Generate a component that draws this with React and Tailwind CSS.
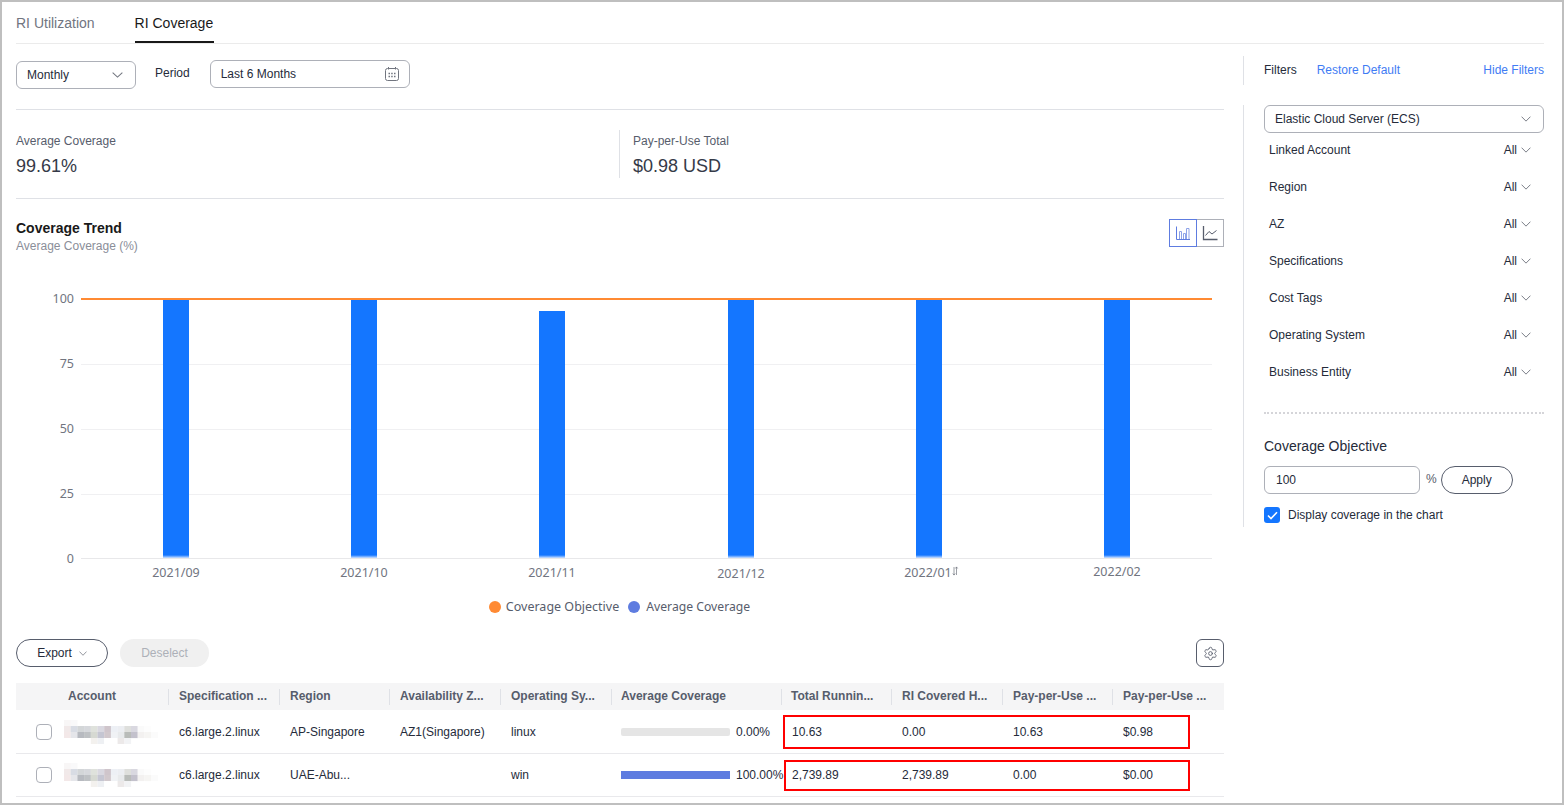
import React from "react";
import { Settings } from "lucide-react";

const Chev = ({ className = "", w = 10, h = 6 }) => (
  <svg width={w} height={h} viewBox="0 0 12 7" className={className} fill="none" preserveAspectRatio="none">
    <path d="M0.7 0.8 L6 6 L11.3 0.8" stroke="#71757f" strokeWidth="1.1" />
  </svg>
);

const filters = ["Linked Account", "Region", "AZ", "Specifications", "Cost Tags", "Operating System", "Business Entity"];
const heads = ["Account", "Specification ...", "Region", "Availability Z...", "Operating Sy...", "Average Coverage", "Total Runnin...", "RI Covered H...", "Pay-per-Use ...", "Pay-per-Use ..."];
const cols = "grid grid-cols-[152px_111px_110px_111px_111px_170px_110px_111px_110px_112px]";

const bars = [
  { x: 176, top: 299 },
  { x: 364, top: 299 },
  { x: 552, top: 311 },
  { x: 741, top: 299 },
  { x: 929, top: 299 },
  { x: 1117, top: 299 },
];
const xLabels = [
  ["2021/09", 176, 577],
  ["2021/10", 364, 577],
  ["2021/11", 552, 577],
  ["2021/12", 741, 578],
  ["2022/01", 928, 577],
  ["2022/02", 1117, 576],
];

function Chart() {
  return (
    <svg width="1208" height="316" viewBox="16 270 1208 316" className="block" style={{ fontFamily: '"Noto Sans", sans-serif' }}>
      <defs>
        <linearGradient id="fade" x1="0" y1="0" x2="0" y2="1">
          <stop offset="0" stopColor="#1476ff" />
          <stop offset="1" stopColor="#cfe2ff" />
        </linearGradient>
      </defs>
      {[364, 429, 494].map((y) => (
        <line key={y} x1="81" x2="1212" y1={y + 0.5} y2={y + 0.5} stroke="#f0f0f2" />
      ))}
      <line x1="81" x2="1212" y1="558.5" y2="558.5" stroke="#e8e8ea" />
      {[["100", 303], ["75", 368], ["50", 433], ["25", 498], ["0", 563]].map(([t, y]) => (
        <text key={t} x="74" y={y} textAnchor="end" fontSize="12.5" fill="#71757f">{t}</text>
      ))}
      {bars.map((b) => (
        <g key={b.x}>
          <rect x={b.x - 13} y={b.top} width="26" height={555 - b.top} fill="#1476ff" />
          <rect x={b.x - 13} y="555" width="26" height="3" fill="url(#fade)" />
        </g>
      ))}
      <line x1="81" x2="1212" y1="299" y2="299" stroke="#ff8a33" strokeWidth="2" />
      {xLabels.map(([t, x, y]) => (
        <text key={t} x={x} y={y} textAnchor="middle" fontSize="12.5" fill="#71757f">{t}</text>
      ))}
      <path d="M954 567v8M952.8 573.5l1.2 1.6 1.2-1.6M956.5 575v-8M955.3 568.5l1.2-1.6 1.2 1.6" stroke="#71757f" strokeWidth="0.7" fill="none" />
    </svg>
  );
}

const mosaicRows = [
  ["#f8f6f6", "#f9f9fa"],
  ["#f1e9e9", "#d8dce4", "#d3d6d8", "#d6d8dc", "#dfe2dc", "#d9d8e0", "#cfc5cb", "#edf0f5", "#eceef2", "#dedfdc", "#d9d8e0", "#fafafa", "#fdfdfd", "#ffffff"],
  ["#f3e8e8", "#e5e6ea", "#b7bac0", "#bec1c4", "#d6d9d2", "#c5c6d2", "#d1c8cc", "#f0f2f5", "#e8eaec", "#b9bcb9", "#c3c1cc", "#f3f1f0", "#f6f5f3", "#fbfbfb"],
  ["#ffffff", "#ffffff", "#ffffff", "#ffffff", "#f3f1ee", "#eef0f3", "#ffffff", "#ffffff", "#ece9e9", "#f2f3f5"],
];

function Mosaic() {
  return (
    <svg width="94" height="24" viewBox="0 0 94 24" className="block shrink-0">
      {mosaicRows.map((row, r) =>
        row.map((c, i) => <rect key={`${r}-${i}`} x={i * 6.7} y={r * 6} width="6.8" height="6.1" fill={c} />)
      )}
    </svg>
  );
}

function Row({ spec, region, az, os, pct, pctText, vals, boxClass }) {
  return (
    <div className={`${cols} relative h-[43px] items-center border-b border-[#e9e9ec] text-xs text-[#252b3a]`}>
      <div className="flex items-center pl-[20px] gap-[12px]">
        <span className="w-4 h-4 rounded-[4px] border border-[#adb0b8] bg-white shrink-0" />
        <Mosaic />
      </div>
      <div className="pl-[11px]">{spec}</div>
      <div className="pl-[11px]">{region}</div>
      <div className="pl-[11px]">{az}</div>
      <div className="pl-[11px]">{os}</div>
      <div className="pl-[10px] flex items-center gap-[6px]">
        <div className={`w-[109px] h-2 shrink-0 ${pct ? "bg-[#5e7ce0]" : "bg-[#e5e5e5] rounded-[2px]"}`} />
        <span className="whitespace-nowrap">{pctText}</span>
      </div>
      {vals.map((v, i) => (
        <div key={i} className="pl-[11px]">{v}</div>
      ))}
      <div className={`absolute border-2 border-[#ff0000] pointer-events-none ${boxClass}`} />
    </div>
  );
}

export default function App() {
  return (
    <div
      className="w-[1564px] h-[805px] box-border border-2 border-[#bfbfbf] bg-white pl-[14px] pr-[18px] overflow-hidden text-[#252b3a]"
      style={{ fontFamily: '"Liberation Sans", Arial, sans-serif' }}
    >
      {/* Tabs */}
      <div className="flex gap-[40px] h-[42px] border-b border-[#ebebeb] text-sm">
        <div className="h-[41px] pt-[11px] text-[#71757f]">RI Utilization</div>
        <div className="h-[41px] pt-[11px] w-[79px] border-b-2 border-[#191919] text-[#191919]">RI Coverage</div>
      </div>

      <div className="flex">
        {/* Left column */}
        <div className="w-[1208px] shrink-0">
          <div className="flex items-start h-[66px] border-b border-[#dfe1e6] pt-[16px] text-xs">
            <div className="mt-[1px] w-[120px] h-[28px] rounded-[6px] border border-[#adb0b8] flex items-center justify-between pl-[10px] pr-[12px]">
              <span>Monthly</span>
              <Chev w={11} />
            </div>
            <span className="ml-[19px] mt-[5px]">Period</span>
            <div className="ml-[20px] w-[200px] h-[28px] rounded-[6px] border border-[#adb0b8] flex items-center justify-between pl-[10px] pr-[9px]">
              <span className="-mt-[1px]">Last 6 Months</span>
              <svg width="16" height="16" viewBox="0 0 16 16" fill="none" stroke="#71757f">
                <rect x="1.5" y="2.5" width="13" height="12" rx="2" />
                <path d="M4.5 1v2.5M11.5 1v2.5" />
                <path d="M4.5 7.5h1.5M7.2 7.5h1.5M10 7.5h1.5M4.5 10.5h1.5M7.2 10.5h1.5M10 10.5h1.5" strokeWidth="1.5" />
              </svg>
            </div>
          </div>

          <div className="flex h-[89px] border-b border-[#dfe1e6] pt-[20px]">
            <div className="w-[603px] pt-[4px]">
              <div className="text-xs text-[#575d6c] leading-[14px]">Average Coverage</div>
              <div className="text-lg leading-[22px] mt-[7px] text-[#353a48]">99.61%</div>
            </div>
            <div className="h-[48px] border-l border-[#dfe1e6] pl-[13px] pt-[4px]">
              <div className="text-xs text-[#575d6c] leading-[14px]">Pay-per-Use Total</div>
              <div className="text-lg leading-[22px] mt-[7px] text-[#353a48]">$0.98 USD</div>
            </div>
          </div>

          <div className="flex justify-between pt-[20px] h-[71px]">
            <div>
              <div className="text-sm font-bold text-[#191919] leading-[18px]">Coverage Trend</div>
              <div className="text-xs text-[#8a8e99] leading-[16px] mt-[1px]">Average Coverage (%)</div>
            </div>
            <div className="flex h-[28px]">
              <div className="w-[28px] h-[28px] border border-[#5e7ce0] flex items-center justify-center">
                <svg width="16" height="16" viewBox="0 0 16 16" fill="none" stroke="#8ea3e8">
                  <path d="M1.5 1.5v13h13.5" stroke="#5e7ce0" />
                  <path d="M4.5 14V6.5h2V14M8.5 14V8.5h2V14M11.5 14V3.5h2.5V14" />
                </svg>
              </div>
              <div className="w-[27px] h-[28px] border border-l-0 border-[#adb0b8] flex items-center justify-center">
                <svg width="16" height="16" viewBox="0 0 16 16" fill="none" stroke="#575d6c">
                  <path d="M1.5 1v13.5h14" strokeWidth="1.3" />
                  <path d="M3.5 10.5l3.5-4 3 2.5 4.5-3.5" />
                </svg>
              </div>
            </div>
          </div>

          <Chart />

          {/* Legend */}
          <div className="flex justify-center items-center gap-[9px] h-[54px] pb-[12px] pr-[1px] text-[12.5px] text-[#575d6c]" style={{ fontFamily: '"Noto Sans", sans-serif' }}>
            <div className="flex items-center gap-[5px]"><span className="w-3 h-3 rounded-full bg-[#ff8a33]" />Coverage Objective</div>
            <div className="flex items-center gap-[6px] text-[12.2px]"><span className="w-3 h-3 rounded-full bg-[#5e7ce0]" />Average Coverage</div>
          </div>

          {/* Toolbar */}
          <div className="flex items-center h-[28px] text-xs -mt-[1px]">
            <div className="w-[92px] h-[28px] rounded-full border border-[#575d6c] flex items-center justify-center gap-[7px]">
              Export <Chev w={8} h={5} />
            </div>
            <div className="ml-[12px] w-[89px] h-[28px] rounded-full bg-[#f0f0f0] text-[#adb0b8] flex items-center justify-center">Deselect</div>
            <div className="ml-auto w-[28px] h-[28px] rounded-[6px] border border-[#575d6c] flex items-center justify-center">
              <Settings size={15} strokeWidth={1.4} color="#575d6c" />
            </div>
          </div>

          {/* Table */}
          <div className="mt-[16px]">
            <div className={`${cols} h-[27px] mb-[1px] items-center bg-[#f5f5f6] text-xs font-bold text-[#575d6c]`}>
              {heads.map((h, i) => (
                <div
                  key={i}
                  className={
                    i === 0
                      ? "pl-[52px] -mt-[1px]"
                      : i === 5 || i === 6
                        ? "h-[16px] leading-[14px] border-l border-[#dfe1e6] pl-[9px] whitespace-nowrap overflow-hidden"
                        : "h-[16px] leading-[14px] border-l border-[#dfe1e6] pl-[10px] whitespace-nowrap overflow-hidden"
                  }
                >
                  {h}
                </div>
              ))}
            </div>
            <Row
              spec="c6.large.2.linux" region="AP-Singapore" az="AZ1(Singapore)" os="linux" pct={0} pctText="0.00%"
              vals={["10.63", "0.00", "10.63", "$0.98"]}
              boxClass="left-[767px] top-[4px] w-[407px] h-[34px]"
            />
            <Row
              spec="c6.large.2.linux" region="UAE-Abu..." az="" os="win" pct={100} pctText="100.00%"
              vals={["2,739.89", "2,739.89", "0.00", "$0.00"]}
              boxClass="left-[768px] top-[6px] w-[406px] h-[31px]"
            />
          </div>
        </div>

        {/* Right column */}
        <div className="ml-[19px] w-[301px] shrink-0">
          <div className="mt-[12px] h-[29px] pb-[2px] border-l border-[#dfe1e6] pl-[20px] flex items-center text-xs">
            <span>Filters</span>
            <span className="ml-[20px] text-[#3f7cf4]">Restore Default</span>
            <span className="ml-auto text-[#3f7cf4]">Hide Filters</span>
          </div>
          <div className="mt-[20px] h-[422px] border-l border-[#dfe1e6] pl-[20px]">
            <div className="h-[28px] rounded-[6px] border border-[#adb0b8] flex items-center justify-between pl-[10px] pr-[12px] text-xs">
              <span>Elastic Cloud Server (ECS)</span>
              <Chev />
            </div>
            <div className="text-xs -mt-[2px]">
              {filters.map((f) => (
                <div key={f} className="flex items-center justify-between h-[37px] pl-[5px] pr-[13px]">
                  <span>{f}</span>
                  <span className="flex items-center gap-[4px]">All <Chev /></span>
                </div>
              ))}
            </div>
            <div className="mt-[22px] border-t-2 border-dotted border-[#d5d5d9]" />
            <div className="mt-[23px] text-sm leading-[18px]">Coverage Objective</div>
            <div className="mt-[11px] flex items-center text-xs">
              <div className="w-[156px] h-[28px] rounded-[6px] border border-[#adb0b8] flex items-center pl-[11px]">100</div>
              <span className="ml-[6px] -mt-[2px] text-[#575d6c]">%</span>
              <div className="ml-[4px] w-[72px] h-[28px] rounded-full border border-[#575d6c] flex items-center justify-center">Apply</div>
            </div>
            <div className="mt-[13px] flex items-center gap-[8px] text-xs">
              <span className="w-4 h-4 rounded-[3px] bg-[#1476ff] flex items-center justify-center">
                <svg width="11" height="9" viewBox="0 0 11 9" fill="none"><path d="M1 4.5l3 3L10 1.2" stroke="#fff" strokeWidth="1.6" /></svg>
              </span>
              Display coverage in the chart
            </div>
          </div>
        </div>
      </div>
    </div>
  );
}
